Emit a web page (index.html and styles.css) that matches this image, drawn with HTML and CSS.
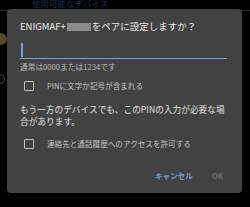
FILE: index.html
```html
<!DOCTYPE html>
<html lang="ja">
<head>
<meta charset="utf-8">
<link rel="stylesheet" href="styles.css">
</head>
<body>
<div class="screen">
  <div class="behind">
    <div class="behind-title">使用可能なデバイス</div>
    <div class="behind-line"></div>
    <div class="behind-dot"></div>
    <div class="behind-ring"></div>
  </div>
  <div class="dialog">
    <div class="title">ENIGMAF+<span class="redact"></span>をペアに設定しますか？</div>
    <div class="input"><span class="cursor"></span></div>
    <div class="hint">通常は0000または1234です</div>
    <div class="check-row">
      <span class="box"></span>
      <span class="label">PINに文字か記号が含まれる</span>
    </div>
    <p class="message">もう一方のデバイスでも、このPINの入力が必要な場合があります。</p>
    <div class="check-row second">
      <span class="box"></span>
      <span class="label">連絡先と通話履歴へのアクセスを許可する</span>
    </div>
    <div class="actions">
      <span class="btn cancel">キャンセル</span>
      <span class="btn ok">OK</span>
    </div>
  </div>
</div>
</body>
</html>
```
FILE: styles.css
```css
* { box-sizing: border-box; }
html, body { margin: 0; padding: 0; }
body {
  background: #000;
  font-family: "Noto Sans CJK JP", "Noto Sans", sans-serif;
  width: 250px;
  height: 207px;
  overflow: hidden;
}
.screen {
  position: relative;
  width: 250px;
  height: 207px;
  background: #000;
}
.behind { position: absolute; inset: 0; }
.behind-title {
  position: absolute;
  left: 32px;
  top: -2px;
  font-size: 8.5px;
  line-height: 10px;
  color: #1f2f55;
}
.behind-line {
  position: absolute;
  left: 0; right: 0;
  top: 10px;
  height: 1px;
  background: #2a2a2a;
}
.behind-dot {
  position: absolute;
  left: -6px; top: 33px;
  width: 13px; height: 12px;
  border-radius: 50%;
  background: #5a4a2a;
}
.behind-ring {
  position: absolute;
  left: -6px; top: 74px;
  width: 11px; height: 10px;
  border-radius: 50%;
  border: 1px solid #444;
}
.dialog {
  position: absolute;
  left: 7px;
  top: 9px;
  width: 235px;
  height: 184px;
  background: #424242;
  border-radius: 4px;
  padding: 10px 13px 0 13px;
  box-shadow: 0 1px 2px rgba(0,0,0,0.6);
}
.title {
  font-size: 9.5px;
  line-height: 14px;
  color: #e8e8e8;
  white-space: nowrap;
}
.redact {
  display: inline-block;
  width: 24px;
  height: 8px;
  background: #8a8a8a;
  vertical-align: -1px;
  margin: 0 1px;
}
.input {
  margin-top: 9px;
  height: 17px;
  width: 207px;
  border-bottom: 1.5px solid #7e9bd6;
  position: relative;
}
.cursor {
  position: absolute;
  left: 1px;
  top: 1px;
  width: 1.5px;
  height: 14px;
  background: #7e9bd6;
}
.hint {
  margin-top: 2px;
  font-size: 7.7px;
  line-height: 12px;
  color: #b8b8b8;
}
.check-row {
  margin-top: 6px;
  height: 14px;
  display: flex;
  align-items: center;
  padding-left: 4px;
  gap: 13px;
}
.check-row.second { margin-top: 9px; }
.box {
  width: 10px;
  height: 10px;
  border: 1.5px solid #bdbdbd;
  border-radius: 1px;
  flex: none;
}
.label {
  font-size: 7.6px;
  line-height: 12px;
  color: #c4c4c4;
}
.message {
  margin: 11px 0 0 0;
  font-size: 8.7px;
  line-height: 12px;
  color: #e0e0e0;
}
.actions {
  margin-top: 19px;
  display: flex;
  justify-content: flex-end;
  gap: 19px;
  padding-right: 6px;
}
.btn {
  font-size: 7.6px;
  line-height: 12px;
  font-weight: 700;
}
.cancel { color: #7e9bd6; }
.ok { color: #6e6e6e; }
```
